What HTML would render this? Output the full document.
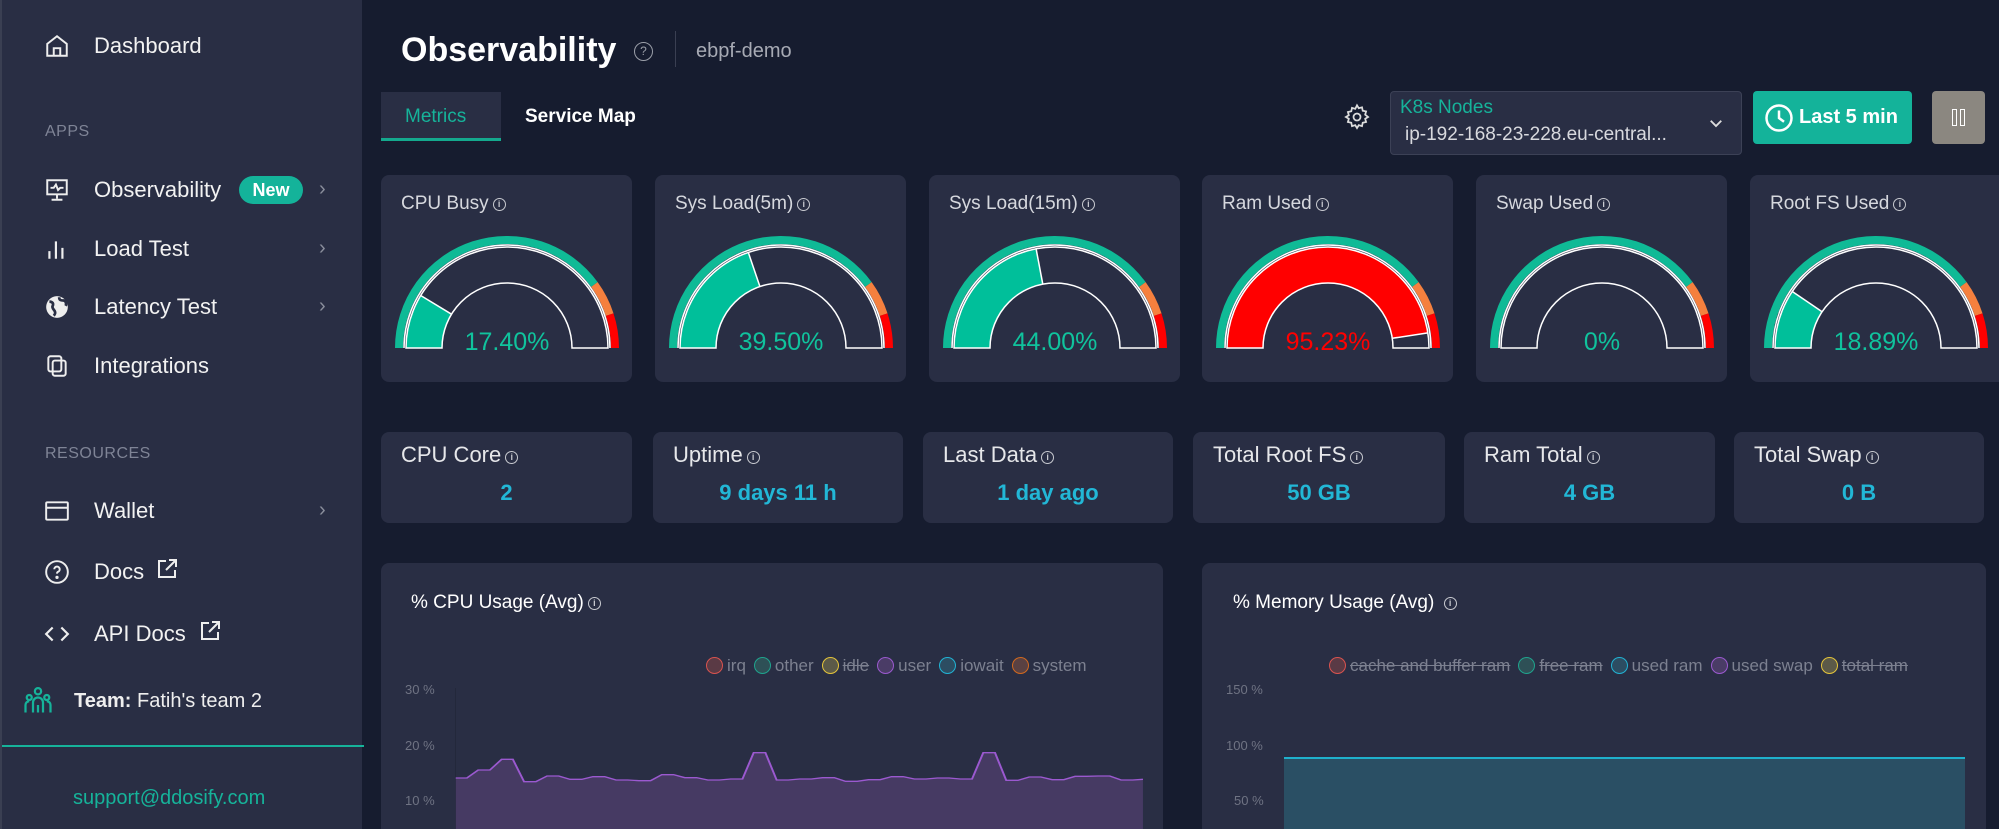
<!DOCTYPE html>
<html style="overflow:hidden;height:829px"><head><meta charset="utf-8"><style>
*{box-sizing:border-box;margin:0;padding:0}
body{width:1999px;height:829px;overflow:hidden;background:#161c2f;font-family:"Liberation Sans",sans-serif;color:#fff;position:relative}
.abs{position:absolute}
.side{left:0;top:0;width:362px;height:829px;background:#292e44;border-left:2px solid #3a3f52}
.nav{position:absolute;left:92px;font-size:22px;color:#f2f2f2;line-height:1}
.ico{position:absolute;left:42px}
.sec{position:absolute;left:43px;font-size:16px;color:#7f8496;letter-spacing:.5px}
.chev{position:absolute;left:317px;color:#8a8e9c;font-size:20px}
.card{position:absolute;background:#292e44;border-radius:8px}
.gt{position:absolute;left:20px;top:18px;font-size:19px;color:#d6d8de}
.st{position:absolute;left:20px;top:10px;font-size:22px;color:#e6e7ea}
.sv{position:absolute;left:0;right:0;top:48px;text-align:center;font-size:22px;font-weight:bold;color:#22b7d6}
.i{display:inline-block;width:13px;height:13px;border:1.3px solid #c8cad0;border-radius:50%;font-size:9px;line-height:11px;text-align:center;vertical-align:2px;margin-left:4px;font-weight:bold;color:#c8cad0}
.lg{position:absolute;font-size:17px;color:#7c8090;white-space:nowrap}
.lg span{display:inline-block;margin-left:8px}
.lg b{display:inline-block;width:17px;height:17px;border-radius:50%;border:1.5px solid;vertical-align:-3px;margin-right:4px}
.s{text-decoration:line-through;font-style:normal}
.ax{position:absolute;font-size:13px;color:#6f7383}
</style></head><body>
<div class="abs side">
 <svg class="ico" style="top:33px" width="26" height="26" viewBox="0 0 24 24" fill="none" stroke="#eee" stroke-width="1.8"><path d="M3 10l9-7 9 7v11H3z"/><path d="M9 21v-7h6v7"/></svg>
 <div class="nav" style="top:35px">Dashboard</div>
 <div class="sec" style="top:123px">APPS</div>
 <svg class="ico" style="top:177px" width="26" height="26" viewBox="0 0 24 24" fill="none" stroke="#eee" stroke-width="1.8"><rect x="3" y="3" width="18" height="13"/><path d="M6 10h3l2-3 2 5 2-2h3M12 16v4M7 21h10"/></svg>
 <div class="nav" style="top:179px">Observability</div>
 <div class="abs" style="left:237px;top:176px;width:64px;height:28px;border-radius:14px;background:#14b39a;font-size:18px;font-weight:bold;text-align:center;line-height:28px">New</div>
 <div class="chev" style="top:178px">›</div>
 <svg class="ico" style="top:236px" width="26" height="26" viewBox="0 0 24 24" fill="none" stroke="#eee" stroke-width="2"><path d="M5 21v-7M11 21V5M17 21v-10"/></svg>
 <div class="nav" style="top:238px">Load Test</div><div class="chev" style="top:237px">›</div>
 <svg class="ico" style="top:294px" width="26" height="26" viewBox="0 0 24 24"><circle cx="12" cy="12" r="10" fill="#eee"/><path d="M5 7c3 0 4 2 3 4s1 3 2 5-1 4-1 4M14 3c0 3 2 3 4 3s3 3 2 5" fill="none" stroke="#292e44" stroke-width="2.5"/></svg>
 <div class="nav" style="top:296px">Latency Test</div><div class="chev" style="top:295px">›</div>
 <svg class="ico" style="top:353px" width="26" height="26" viewBox="0 0 24 24" fill="none" stroke="#eee" stroke-width="1.8"><rect x="4" y="3" width="12" height="14" rx="2"/><rect x="8" y="7" width="12" height="14" rx="2"/></svg>
 <div class="nav" style="top:355px">Integrations</div>
 <div class="sec" style="top:445px">RESOURCES</div>
 <svg class="ico" style="top:498px" width="26" height="26" viewBox="0 0 24 24" fill="none" stroke="#eee" stroke-width="1.8"><rect x="2" y="4" width="20" height="16" rx="1"/><path d="M2 9h20"/></svg>
 <div class="nav" style="top:500px">Wallet</div><div class="chev" style="top:499px">›</div>
 <svg class="ico" style="top:559px" width="26" height="26" viewBox="0 0 24 24" fill="none" stroke="#eee" stroke-width="1.8"><circle cx="12" cy="12" r="10"/><path d="M9.5 9.5a2.5 2.5 0 1 1 3.5 2.3c-.8.4-1 1-1 1.7"/><circle cx="12" cy="17" r=".6" fill="#eee"/></svg>
 <div class="nav" style="top:561px">Docs</div>
 <svg class="abs" style="left:153px;top:557px" width="24" height="24" viewBox="0 0 24 24" fill="none" stroke="#eee" stroke-width="2"><path d="M11 4H4v16h16v-7M14 3h7v7M21 3l-10 10"/></svg>
 <svg class="ico" style="top:621px" width="26" height="26" viewBox="0 0 24 24" fill="none" stroke="#eee" stroke-width="2"><path d="M8 6l-6 6 6 6M16 6l6 6-6 6"/></svg>
 <div class="nav" style="top:623px">API Docs</div>
 <svg class="abs" style="left:196px;top:619px" width="24" height="24" viewBox="0 0 24 24" fill="none" stroke="#eee" stroke-width="2"><path d="M11 4H4v16h16v-7M14 3h7v7M21 3l-10 10"/></svg>
 <svg class="abs" style="left:21px;top:685px" width="30" height="30" viewBox="0 0 24 24" fill="none" stroke="#16b39a" stroke-width="1.8"><circle cx="12" cy="5" r="2.5"/><circle cx="5" cy="10" r="2"/><circle cx="19" cy="10" r="2"/><path d="M8 22v-8a4 4 0 0 1 8 0v8M2 22v-6a3 3 0 0 1 3-3M22 22v-6a3 3 0 0 0-3-3M12 22v-6"/></svg>
 <div class="abs" style="left:72px;top:690px;font-size:20px;color:#eee"><b style="font-weight:600">Team:</b> Fatih's team 2</div>
 <div class="abs" style="left:0;top:745px;width:362px;height:2px;background:#16b39a"></div>
 <div class="abs" style="left:71px;top:787px;font-size:20px;color:#16b39a">support@ddosify.com</div>
</div>

<div class="abs" style="left:401px;top:31px;font-size:34px;font-weight:bold">Observability</div>
<div class="abs" style="left:634px;top:42px;width:19px;height:19px;border:1.5px solid #9a9ea8;border-radius:50%;font-size:12px;color:#9a9ea8;text-align:center;line-height:16px">?</div>
<div class="abs" style="left:675px;top:31px;width:1px;height:36px;background:#3a3f52"></div>
<div class="abs" style="left:696px;top:40px;font-size:20px;color:#a7aab4">ebpf-demo</div>
<div class="abs" style="left:381px;top:92px;width:120px;height:49px;background:#292e44;border-bottom:3px solid #14a98e"></div>
<div class="abs" style="left:405px;top:106px;font-size:19px;color:#16b39a">Metrics</div>
<div class="abs" style="left:525px;top:106px;font-size:19px;color:#fff;font-weight:600">Service Map</div>
<svg class="abs" style="left:1343px;top:103px" width="28" height="28" viewBox="0 0 24 24" fill="none" stroke="#ddd" stroke-width="1.5"><circle cx="12" cy="12" r="3"/><path d="M12 2l1.5 2.5 2.8-.8.6 2.9 2.9.6-.8 2.8L21.5 12l-2.5 1.5.8 2.8-2.9.6-.6 2.9-2.8-.8L12 21.5l-1.5-2.5-2.8.8-.6-2.9-2.9-.6.8-2.8L2.5 12 5 10.5l-.8-2.8 2.9-.6.6-2.9 2.8.8z"/></svg>
<div class="abs" style="left:1390px;top:91px;width:352px;height:64px;background:#292e44;border:1px solid #3c4156;border-radius:4px">
 <div class="abs" style="left:9px;top:5px;font-size:19px;color:#16b39a">K8s Nodes</div>
 <div class="abs" style="left:14px;top:32px;font-size:19px;color:#d8d9de">ip-192-168-23-228.eu-central...</div>
 <svg class="abs" style="left:316px;top:22px" width="18" height="18" viewBox="0 0 24 24" fill="none" stroke="#ddd" stroke-width="2.5"><path d="M5 9l7 7 7-7"/></svg>
</div>
<div class="abs" style="left:1753px;top:91px;width:159px;height:53px;background:#14b39a;border-radius:4px">
 <svg class="abs" style="left:11px;top:12px" width="30" height="30" viewBox="0 0 24 24" fill="none" stroke="#fff" stroke-width="2"><circle cx="12" cy="12" r="10"/><path d="M12 6v6l4 3"/></svg>
 <div class="abs" style="left:46px;top:15px;font-size:20px;font-weight:600">Last 5 min</div>
</div>
<div class="abs" style="left:1932px;top:91px;width:53px;height:53px;background:#8b8780;border-radius:4px">
 <div class="abs" style="left:20px;top:18px;width:5px;height:17px;border:1.5px solid #fff"></div>
 <div class="abs" style="left:28px;top:18px;width:5px;height:17px;border:1.5px solid #fff"></div>
</div>

<div class="card" style="left:381px;top:175px;width:251px;height:207px"><div class="gt">CPU Busy<span class="i">i</span></div>
<svg class="abs" style="left:0;top:0" width="251" height="207"><path d="M18 173A108 108 0 0 1 213.4 109.5" fill="none" stroke="#0fba96" stroke-width="8"/><path d="M213.4 109.5A108 108 0 0 1 228.7 139.6" fill="none" stroke="#f5803e" stroke-width="8"/><path d="M228.7 139.6A108 108 0 0 1 234 173" fill="none" stroke="#f00" stroke-width="8"/><path d="M23 173A103 103 0 0 1 229 173" fill="none" stroke="#fff" stroke-width="1.5"/><path d="M25 173A101 101 0 0 1 227 173L191 173A65 65 0 0 0 61 173Z" fill="#292e44"/><path d="M25 173A101 101 0 0 1 39.7 120.5L70.5 139.2A65 65 0 0 0 61 173Z" fill="#00bf9a"/><path d="M25 173A101 101 0 0 1 227 173L191 173A65 65 0 0 0 61 173Z" fill="none" stroke="#fff" stroke-width="1.5"/><path d="M39.7 120.5L70.5 139.2" stroke="#fff" stroke-width="1.5"/><text x="126" y="175" text-anchor="middle" font-size="25" fill="#10c39d" font-family="Liberation Sans">17.40%</text></svg></div>

<div class="card" style="left:655px;top:175px;width:251px;height:207px"><div class="gt">Sys Load(5m)<span class="i">i</span></div>
<svg class="abs" style="left:0;top:0" width="251" height="207"><path d="M18 173A108 108 0 0 1 213.4 109.5" fill="none" stroke="#0fba96" stroke-width="8"/><path d="M213.4 109.5A108 108 0 0 1 228.7 139.6" fill="none" stroke="#f5803e" stroke-width="8"/><path d="M228.7 139.6A108 108 0 0 1 234 173" fill="none" stroke="#f00" stroke-width="8"/><path d="M23 173A103 103 0 0 1 229 173" fill="none" stroke="#fff" stroke-width="1.5"/><path d="M25 173A101 101 0 0 1 227 173L191 173A65 65 0 0 0 61 173Z" fill="#292e44"/><path d="M25 173A101 101 0 0 1 93.3 77.4L104.9 111.5A65 65 0 0 0 61 173Z" fill="#00bf9a"/><path d="M25 173A101 101 0 0 1 227 173L191 173A65 65 0 0 0 61 173Z" fill="none" stroke="#fff" stroke-width="1.5"/><path d="M93.3 77.4L104.9 111.5" stroke="#fff" stroke-width="1.5"/><text x="126" y="175" text-anchor="middle" font-size="25" fill="#10c39d" font-family="Liberation Sans">39.50%</text></svg></div>

<div class="card" style="left:929px;top:175px;width:251px;height:207px"><div class="gt">Sys Load(15m)<span class="i">i</span></div>
<svg class="abs" style="left:0;top:0" width="251" height="207"><path d="M18 173A108 108 0 0 1 213.4 109.5" fill="none" stroke="#0fba96" stroke-width="8"/><path d="M213.4 109.5A108 108 0 0 1 228.7 139.6" fill="none" stroke="#f5803e" stroke-width="8"/><path d="M228.7 139.6A108 108 0 0 1 234 173" fill="none" stroke="#f00" stroke-width="8"/><path d="M23 173A103 103 0 0 1 229 173" fill="none" stroke="#fff" stroke-width="1.5"/><path d="M25 173A101 101 0 0 1 227 173L191 173A65 65 0 0 0 61 173Z" fill="#292e44"/><path d="M25 173A101 101 0 0 1 107.1 73.8L113.8 109.2A65 65 0 0 0 61 173Z" fill="#00bf9a"/><path d="M25 173A101 101 0 0 1 227 173L191 173A65 65 0 0 0 61 173Z" fill="none" stroke="#fff" stroke-width="1.5"/><path d="M107.1 73.8L113.8 109.2" stroke="#fff" stroke-width="1.5"/><text x="126" y="175" text-anchor="middle" font-size="25" fill="#10c39d" font-family="Liberation Sans">44.00%</text></svg></div>

<div class="card" style="left:1202px;top:175px;width:251px;height:207px"><div class="gt">Ram Used<span class="i">i</span></div>
<svg class="abs" style="left:0;top:0" width="251" height="207"><path d="M18 173A108 108 0 0 1 213.4 109.5" fill="none" stroke="#0fba96" stroke-width="8"/><path d="M213.4 109.5A108 108 0 0 1 228.7 139.6" fill="none" stroke="#f5803e" stroke-width="8"/><path d="M228.7 139.6A108 108 0 0 1 234 173" fill="none" stroke="#f00" stroke-width="8"/><path d="M23 173A103 103 0 0 1 229 173" fill="none" stroke="#fff" stroke-width="1.5"/><path d="M25 173A101 101 0 0 1 227 173L191 173A65 65 0 0 0 61 173Z" fill="#292e44"/><path d="M25 173A101 101 0 0 1 225.9 157.9L190.3 163.3A65 65 0 0 0 61 173Z" fill="#ff0000"/><path d="M25 173A101 101 0 0 1 227 173L191 173A65 65 0 0 0 61 173Z" fill="none" stroke="#fff" stroke-width="1.5"/><path d="M225.9 157.9L190.3 163.3" stroke="#fff" stroke-width="1.5"/><text x="126" y="175" text-anchor="middle" font-size="25" fill="#ff0000" font-family="Liberation Sans">95.23%</text></svg></div>

<div class="card" style="left:1476px;top:175px;width:251px;height:207px"><div class="gt">Swap Used<span class="i">i</span></div>
<svg class="abs" style="left:0;top:0" width="251" height="207"><path d="M18 173A108 108 0 0 1 213.4 109.5" fill="none" stroke="#0fba96" stroke-width="8"/><path d="M213.4 109.5A108 108 0 0 1 228.7 139.6" fill="none" stroke="#f5803e" stroke-width="8"/><path d="M228.7 139.6A108 108 0 0 1 234 173" fill="none" stroke="#f00" stroke-width="8"/><path d="M23 173A103 103 0 0 1 229 173" fill="none" stroke="#fff" stroke-width="1.5"/><path d="M25 173A101 101 0 0 1 227 173L191 173A65 65 0 0 0 61 173Z" fill="#292e44" stroke="#fff" stroke-width="1.5"/><text x="126" y="175" text-anchor="middle" font-size="25" fill="#10c39d" font-family="Liberation Sans">0%</text></svg></div>

<div class="card" style="left:1750px;top:175px;width:260px;height:207px"><div class="gt">Root FS Used<span class="i">i</span></div>
<svg class="abs" style="left:0;top:0" width="251" height="207"><path d="M18 173A108 108 0 0 1 213.4 109.5" fill="none" stroke="#0fba96" stroke-width="8"/><path d="M213.4 109.5A108 108 0 0 1 228.7 139.6" fill="none" stroke="#f5803e" stroke-width="8"/><path d="M228.7 139.6A108 108 0 0 1 234 173" fill="none" stroke="#f00" stroke-width="8"/><path d="M23 173A103 103 0 0 1 229 173" fill="none" stroke="#fff" stroke-width="1.5"/><path d="M25 173A101 101 0 0 1 227 173L191 173A65 65 0 0 0 61 173Z" fill="#292e44"/><path d="M25 173A101 101 0 0 1 42.3 116.5L72.1 136.7A65 65 0 0 0 61 173Z" fill="#00bf9a"/><path d="M25 173A101 101 0 0 1 227 173L191 173A65 65 0 0 0 61 173Z" fill="none" stroke="#fff" stroke-width="1.5"/><path d="M42.3 116.5L72.1 136.7" stroke="#fff" stroke-width="1.5"/><text x="126" y="175" text-anchor="middle" font-size="25" fill="#10c39d" font-family="Liberation Sans">18.89%</text></svg></div>

<div class="card" style="left:381px;top:432px;width:251px;height:91px"><div class="st">CPU Core<span class="i">i</span></div><div class="sv">2</div></div>
<div class="card" style="left:653px;top:432px;width:250px;height:91px"><div class="st">Uptime<span class="i">i</span></div><div class="sv">9 days 11 h</div></div>
<div class="card" style="left:923px;top:432px;width:250px;height:91px"><div class="st">Last Data<span class="i">i</span></div><div class="sv">1 day ago</div></div>
<div class="card" style="left:1193px;top:432px;width:252px;height:91px"><div class="st">Total Root FS<span class="i">i</span></div><div class="sv">50 GB</div></div>
<div class="card" style="left:1464px;top:432px;width:251px;height:91px"><div class="st">Ram Total<span class="i">i</span></div><div class="sv">4 GB</div></div>
<div class="card" style="left:1734px;top:432px;width:250px;height:91px"><div class="st">Total Swap<span class="i">i</span></div><div class="sv">0 B</div></div>

<div class="card" style="left:381px;top:563px;width:782px;height:266px;border-radius:8px 8px 0 0"></div>
<div class="abs" style="left:411px;top:592px;font-size:19px;color:#fff">% CPU Usage (Avg)<span class="i">i</span></div>
<div class="lg" style="left:706px;top:656px"><b style="border-color:#d9534f;background:#5a3a45"></b>irq<span><b style="border-color:#1fa48e;background:#2e5056"></b>other</span><span><b style="border-color:#e4c43a;background:#5c5a48"></b><i class="s">idle</i></span><span><b style="border-color:#9b59d0;background:#4a3c66"></b>user</span><span><b style="border-color:#21b3d4;background:#2c4d62"></b>iowait</span><span><b style="border-color:#d2691e;background:#5a4142"></b>system</span></div>
<div class="ax" style="left:405px;top:682px">30 %</div><div class="ax" style="left:405px;top:738px">20 %</div><div class="ax" style="left:405px;top:793px">10 %</div>
<div class="abs" style="left:455px;top:688px;width:1px;height:141px;background:#23283b"></div>
<svg class="abs" style="left:370px;top:560px" width="800" height="269" viewBox="0 0 1568 807" preserveAspectRatio="none">
<path d="M168 654L190 654L212 630L235 630L258 598L280 598L302 665L325 665L347 648L370 648L392 658L415 658L437 650L460 650L482 660L505 660L527 662L550 662L572 644L595 644L617 653L640 653L662 660L685 660L707 657L730 657L752 578L775 578L797 660L820 660L842 657L865 657L887 653L910 653L932 664L955 664L977 659L1000 659L1022 650L1045 650L1067 657L1090 657L1112 654L1135 654L1157 657L1180 657L1202 578L1225 578L1247 661L1270 661L1292 651L1315 651L1337 659L1360 659L1382 649L1405 649L1427 648L1450 648L1472 660L1495 660L1515 658L1515 807L168 807Z" fill="#463a63"/>
<path d="M168 654L190 654L212 630L235 630L258 598L280 598L302 665L325 665L347 648L370 648L392 658L415 658L437 650L460 650L482 660L505 660L527 662L550 662L572 644L595 644L617 653L640 653L662 660L685 660L707 657L730 657L752 578L775 578L797 660L820 660L842 657L865 657L887 653L910 653L932 664L955 664L977 659L1000 659L1022 650L1045 650L1067 657L1090 657L1112 654L1135 654L1157 657L1180 657L1202 578L1225 578L1247 661L1270 661L1292 651L1315 651L1337 659L1360 659L1382 649L1405 649L1427 648L1450 648L1472 660L1495 660L1515 658" fill="none" stroke="#9b59d0" stroke-width="4"/>
</svg>

<div class="card" style="left:1202px;top:563px;width:784px;height:266px;border-radius:8px 8px 0 0"></div>
<div class="abs" style="left:1233px;top:592px;font-size:19px;color:#fff">% Memory Usage (Avg) <span class="i">i</span></div>
<div class="lg" style="left:1329px;top:656px"><b style="border-color:#d9534f;background:#5a3a45"></b><i class="s">cache and buffer ram</i><span><b style="border-color:#1fa48e;background:#2e5056"></b><i class="s">free ram</i></span><span><b style="border-color:#21b3d4;background:#2c4d62"></b>used ram</span><span><b style="border-color:#9b59d0;background:#4a3c66"></b>used swap</span><span><b style="border-color:#e4c43a;background:#5c5a48"></b><i class="s">total ram</i></span></div>
<div class="ax" style="left:1226px;top:682px">150 %</div><div class="ax" style="left:1226px;top:738px">100 %</div><div class="ax" style="left:1234px;top:793px">50 %</div>
<div class="abs" style="left:1284px;top:757px;width:681px;height:72px;background:#2a4f64;border-top:2px solid #1fb0cc"></div>
</body></html>
